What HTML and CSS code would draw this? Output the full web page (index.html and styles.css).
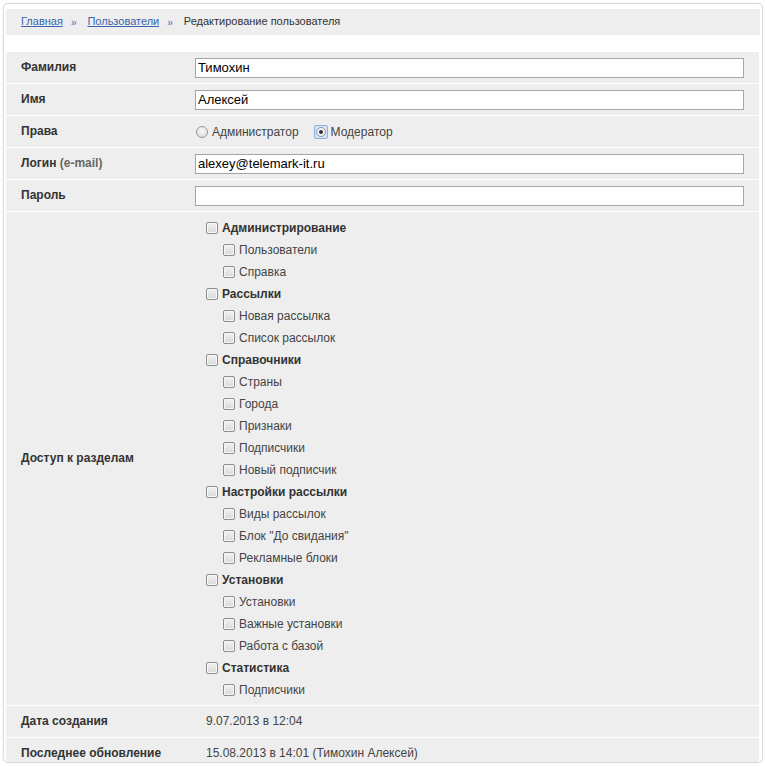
FILE: index.html
```html
<!DOCTYPE html>
<html lang="ru">
<head>
<meta charset="utf-8">
<title>Редактирование пользователя</title>
<link rel="stylesheet" href="styles.css">
</head>
<body>
<div class="frame">
  <div class="crumbs">
    <a href="#" class="crumb-link">Главная</a>
    <span class="sep">»</span>
    <a href="#" class="crumb-link">Пользователи</a>
    <span class="sep">»</span>
    <span class="crumb-current">Редактирование пользователя</span>
  </div>
  <table class="form">
    <tr>
      <td class="lbl"><span class="lt">Фамилия</span></td>
      <td class="val"><div class="inp">Тимохин</div></td>
    </tr>
    <tr>
      <td class="lbl"><span class="lt">Имя</span></td>
      <td class="val"><div class="inp">Алексей</div></td>
    </tr>
    <tr>
      <td class="lbl"><span class="lt">Права</span></td>
      <td class="val">
        <div class="radios">
          <label class="radio"><span class="rwrap"><span class="rbox"><span class="rdot"></span></span></span>Администратор</label>
          <label class="radio on"><span class="rwrap"><span class="rbox"><span class="rdot"></span></span></span>Модератор</label>
        </div>
      </td>
    </tr>
    <tr>
      <td class="lbl"><span class="lt">Логин <span class="muted">(e-mail)</span></span></td>
      <td class="val"><div class="inp">alexey@telemark-it.ru</div></td>
    </tr>
    <tr>
      <td class="lbl"><span class="lt">Пароль</span></td>
      <td class="val"><div class="inp"></div></td>
    </tr>
    <tr>
      <td class="lbl"><span class="lt">Доступ к разделам</span></td>
      <td class="val tall">
        <ul class="tree">
          <li class="top"><span class="cb"></span>Администрирование</li>
          <li class="sub"><span class="cb"></span>Пользователи</li>
          <li class="sub"><span class="cb"></span>Справка</li>
          <li class="top"><span class="cb"></span>Рассылки</li>
          <li class="sub"><span class="cb"></span>Новая рассылка</li>
          <li class="sub"><span class="cb"></span>Список рассылок</li>
          <li class="top"><span class="cb"></span>Справочники</li>
          <li class="sub"><span class="cb"></span>Страны</li>
          <li class="sub"><span class="cb"></span>Города</li>
          <li class="sub"><span class="cb"></span>Признаки</li>
          <li class="sub"><span class="cb"></span>Подписчики</li>
          <li class="sub"><span class="cb"></span>Новый подписчик</li>
          <li class="top"><span class="cb"></span>Настройки рассылки</li>
          <li class="sub"><span class="cb"></span>Виды рассылок</li>
          <li class="sub"><span class="cb"></span>Блок "До свидания"</li>
          <li class="sub"><span class="cb"></span>Рекламные блоки</li>
          <li class="top"><span class="cb"></span>Установки</li>
          <li class="sub"><span class="cb"></span>Установки</li>
          <li class="sub"><span class="cb"></span>Важные установки</li>
          <li class="sub"><span class="cb"></span>Работа с базой</li>
          <li class="top"><span class="cb"></span>Статистика</li>
          <li class="sub"><span class="cb"></span>Подписчики</li>
        </ul>
      </td>
    </tr>
    <tr>
      <td class="lbl"><span class="lt">Дата создания</span></td>
      <td class="val"><span class="txt">9.07.2013 в 12:04</span></td>
    </tr>
    <tr>
      <td class="lbl"><span class="lt">Последнее обновление</span></td>
      <td class="val"><span class="txt">15.08.2013 в 14:01 (Тимохин Алексей)</span></td>
    </tr>
  </table>
</div>
</body>
</html>
```

FILE: styles.css
```css
html, body {
  margin: 0;
  padding: 0;
  background: #fff;
}
body {
  font-family: "Liberation Sans", Arial, sans-serif;
  font-size: 12px;
  color: #333;
}
.frame {
  box-sizing: border-box;
  margin: 3px;
  width: 760px;
  height: 760px;
  border: 1px solid #dcdcdc;
  border-radius: 5px;
  box-shadow: 0 0 2px rgba(0,0,0,0.12);
  padding: 5px 2px 2px 2px;
  overflow: hidden;
}
.crumbs {
  background: #eee;
  height: 26px;
  display: flex;
  align-items: center;
  padding-left: 15px;
  padding-bottom: 3px;
  box-sizing: border-box;
  font-size: 11px;
}
.crumb-link {
  color: #3a64ab;
  text-decoration: underline;
}
.sep {
  color: #4a70b0;
  font-size: 10px;
  margin: 0 11px 0 8px;
  position: relative;
  top: 2px;
}
.crumb-current {
  color: #333;
}
.form {
  margin-top: 17px;
  width: 753px;
  border-collapse: collapse;
  border-spacing: 0;
}
.form td {
  background: #eee;
  border-bottom: 1px solid #fff;
  height: 31px;
  padding: 0;
  vertical-align: middle;
}
.lbl {
  width: 174px;
  padding-left: 15px !important;
  font-weight: bold;
  color: #333;
}
.lt {
  position: relative;
  top: -1px;
}
.muted {
  color: #666;
}
.val {
  padding-right: 15px !important;
}
.inp {
  box-sizing: border-box;
  height: 20px;
  width: 549px;
  border: 1px solid #a5a5a5;
  background: #fff;
  font-size: 13px;
  line-height: 18px;
  padding-left: 2px;
  color: #000;
}
.radios {
  display: flex;
  align-items: center;
  color: #444;
  margin-top: 1px;
}
.radio {
  display: flex;
  align-items: center;
  margin-right: 15px;
}
.rwrap {
  box-sizing: border-box;
  width: 12px;
  height: 12px;
  display: flex;
  align-items: center;
  justify-content: center;
  margin: 0 4px 0 1px;
}
.radio.on .rwrap {
  width: 14px;
  height: 14px;
  border: 1px solid #86b3e4;
  border-radius: 2px;
  background: #d6e6f8;
  margin: 0 3px 0 0;
}
.rbox {
  box-sizing: border-box;
  width: 12px;
  height: 12px;
  border-radius: 50%;
  border: 1px solid #999;
  background: radial-gradient(circle at 50% 40%, #fbfbfb 0, #e2e2e2 70%, #d4d4d4 100%);
  display: flex;
  align-items: center;
  justify-content: center;
  flex: none;
}
.radio.on .rbox {
  width: 10px;
  height: 10px;
  border-color: #8d98a6;
  background: radial-gradient(circle at 50% 40%, #ffffff 0, #e6ebf1 80%);
}
.rdot {
  display: none;
  width: 4px;
  height: 4px;
  border-radius: 50%;
  background: #333;
}
.radio.on .rdot {
  display: block;
}
.tall {
  padding-top: 5px !important;
  padding-bottom: 4px !important;
}
.tree {
  list-style: none;
  margin: 0;
  padding: 0 0 0 11px;
  color: #444;
}
.tree li {
  height: 22px;
  display: flex;
  align-items: center;
}
.tree li.top {
  font-weight: bold;
  color: #333;
}
.tree li.sub {
  padding-left: 17px;
}
.cb {
  box-sizing: border-box;
  width: 12px;
  height: 12px;
  border: 1px solid #8e8e8e;
  border-radius: 2px;
  background: linear-gradient(#f2f2f2, #d9d9d9);
  box-shadow: inset 0 0 0 1px #f7f7f7;
  margin-right: 4px;
  flex: none;
}
.txt {
  padding-left: 11px;
  color: #444;
  position: relative;
  top: -1px;
}
```
